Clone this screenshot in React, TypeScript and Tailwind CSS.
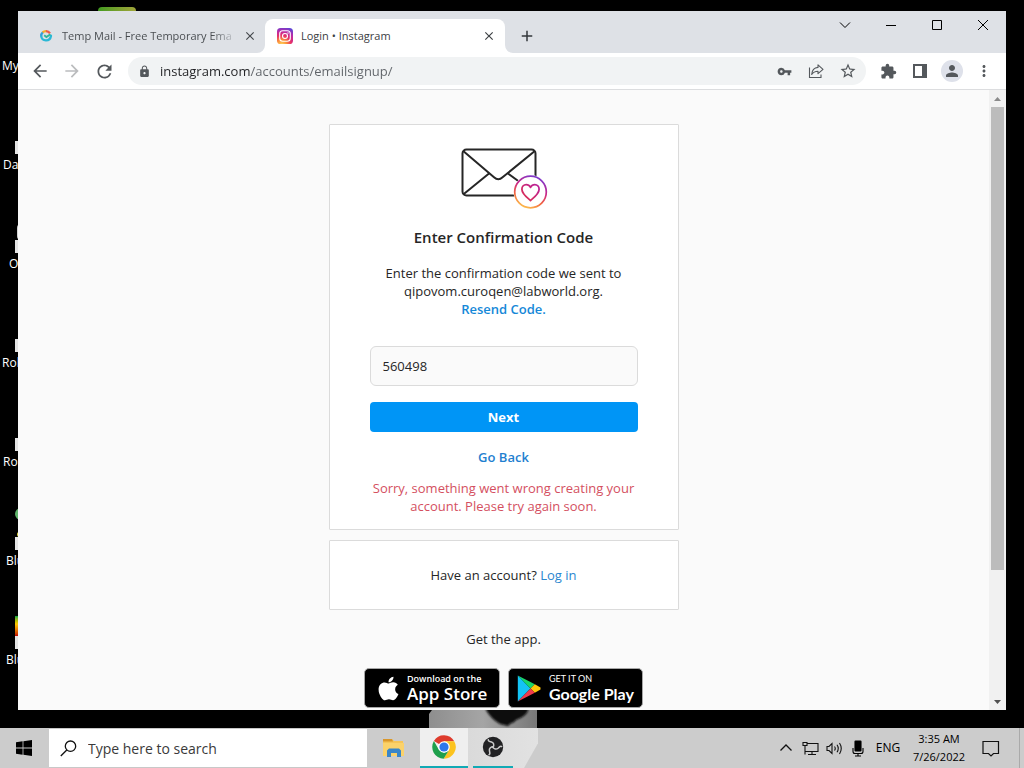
import { useState } from "react";
import type { ReactNode } from "react";
import {
  MdArrowBack,
  MdArrowForward,
  MdClose,
  MdExtension,
  MdLock,
  MdMoreVert,
  MdPerson,
  MdRefresh,
  MdStarBorder,
  MdAdd,
  MdVpnKey,
} from "react-icons/md";
import { FaApple } from "react-icons/fa";

type Shortcut = { label: string; indent: string; badge: boolean; art?: ReactNode };

const shortcuts: Shortcut[] = [
  { label: "My", indent: "pl-[2px]", badge: false },
  { label: "Dat", indent: "pl-[3px]", badge: true },
  { label: "O", indent: "pl-[9px]", badge: true, art: <span className="ml-[2px] h-4 w-2 rounded-full bg-neutral-300" /> },
  { label: "Rol", indent: "pl-[2px]", badge: true },
  { label: "Ro", indent: "pl-[3px]", badge: true },
  {
    label: "Blu",
    indent: "pl-[6px]",
    badge: true,
    art: (
      <>
        <span className="mb-3 size-3 shrink-0 rounded-full bg-[#5fb46b]" />
        <span className="ml-[2px] size-[5px] shrink-0 rounded-full bg-[#d8cf3c]" />
      </>
    ),
  },
  {
    label: "Blu",
    indent: "pl-[6px]",
    badge: true,
    art: <span className="h-5 w-[3px] shrink-0 bg-linear-to-b from-green-600 via-yellow-400 via-40% to-red-700" />,
  },
];

function DesktopShortcuts() {
  return (
    <div className="flex w-[18px] shrink-0 flex-col overflow-hidden pt-[7px] text-white">
      {shortcuts.map((s, i) => (
        <div key={i} className="flex h-[99px] w-20 shrink-0 flex-col pt-1">
          <div className="flex h-5 flex-col items-start justify-end pl-[15px]">{s.art}</div>
          <div className="flex h-[14px] items-start pl-[15px]">
            {s.badge && <span className="h-[13px] w-3 bg-neutral-200" />}
          </div>
          <span className={`${s.indent} mt-[2px] text-[12px] leading-4`}>{s.label}</span>
        </div>
      ))}
    </div>
  );
}

function InstagramIcon() {
  return (
    <svg viewBox="0 0 16 16" className="size-4 shrink-0" aria-hidden="true">
      <defs>
        <radialGradient id="ig" cx="0.3" cy="1.05" r="1.15">
          <stop offset="0" stopColor="#ffd95a" />
          <stop offset="0.28" stopColor="#fb8d3a" />
          <stop offset="0.52" stopColor="#e52e6b" />
          <stop offset="0.76" stopColor="#b52bab" />
          <stop offset="1" stopColor="#5b45d6" />
        </radialGradient>
      </defs>
      <rect width="16" height="16" rx="3.6" fill="url(#ig)" />
      <rect x="2.7" y="2.7" width="10.6" height="10.6" rx="3" fill="none" stroke="#fff" strokeWidth="1.1" />
      <circle cx="8" cy="8" r="2.5" fill="none" stroke="#fff" strokeWidth="1.1" />
      <circle cx="11" cy="5" r="0.7" fill="#fff" />
    </svg>
  );
}

function TempMailIcon() {
  return (
    <svg viewBox="0 0 16 16" className="size-4 shrink-0" fill="none" strokeWidth="2.3" aria-hidden="true">
      <path d="M3.200 8.500A4.900 4.900 0 0 1 5 4.200" stroke="#35a0d8" />
      <path d="M4.600 4.400A4.900 4.900 0 0 1 8.400 3.200" stroke="#f2ae2e" />
      <path d="M8 3.200A4.900 4.900 0 0 1 12 5.400" stroke="#ee5a4a" />
      <path d="M3.200 8A4.900 4.900 0 0 0 12.900 8.300V6.800" stroke="#2bb8d6" />
      <path d="M6.200 7.200l2.200 1.800 4-2.800" stroke="#2fb69a" strokeWidth="1.800" />
    </svg>
  );
}

function TabStrip() {
  return (
    <div className="flex h-[42px] shrink-0 items-stretch bg-[#dee1e6] pl-[7px]">
      <div role="tablist" className="flex items-end">
        <div className="flex h-[34px] w-60 items-center pr-2 pl-[13px] text-[#45494d]">
          <TempMailIcon />
          <button
            role="tab"
            aria-selected="false"
            className="ml-2 w-[176px] overflow-hidden bg-linear-to-r from-[#45494d] from-85% to-transparent bg-clip-text text-left text-[11px] whitespace-nowrap text-transparent"
          >
            Temp Mail - Free Temporary Ema
          </button>
          <button aria-label="Close tab" className="ml-auto">
            <MdClose size={14} />
          </button>
        </div>
        <div className="relative flex h-[34px] w-60 items-center rounded-t-lg bg-white pr-[9px] pl-3 text-[#3c4043]">
          <svg viewBox="0 0 8 8" className="absolute bottom-0 -left-2 size-2 fill-white" aria-hidden="true">
            <path d="M8 0v8H0a8 8 0 0 0 8-8z" />
          </svg>
          <svg viewBox="0 0 8 8" className="absolute -right-2 bottom-0 size-2 fill-white" aria-hidden="true">
            <path d="M0 0v8h8a8 8 0 0 1-8-8z" />
          </svg>
          <InstagramIcon />
          <button role="tab" aria-selected="true" className="ml-2 text-[11px] whitespace-nowrap">
            Login • Instagram
          </button>
          <button aria-label="Close tab" className="ml-auto">
            <MdClose size={14} />
          </button>
        </div>
      </div>
      <button aria-label="New tab" className="ml-[13px] self-end pb-2 text-[#33373b]">
        <MdAdd size={18} />
      </button>
      <div className="ml-auto flex h-7 text-black">
        {[
          { name: "Search tabs", d: "M3 5.500 8 10.500l5-5" },
          { name: "Minimize", d: "M3 8.500h10" },
          { name: "Maximize", d: "M3.500 3.500h9v9h-9z" },
          { name: "Close", d: "M3 3l10 10M13 3 3 13" },
        ].map((c) => (
          <button key={c.name} aria-label={c.name} className="flex w-[46px] items-center justify-center">
            <svg viewBox="0 0 16 16" className="size-4" fill="none" stroke="currentColor" strokeWidth="1">
              <path d={c.d} />
            </svg>
          </button>
        ))}
      </div>
    </div>
  );
}

function IconButton({ label, children, className = "" }: { label: string; children: ReactNode; className?: string }) {
  return (
    <button aria-label={label} className={`flex size-8 shrink-0 items-center justify-center text-[#54585c] ${className}`}>
      {children}
    </button>
  );
}

function Toolbar() {
  const [url, setUrl] = useState("instagram.com/accounts/emailsignup/");
  return (
    <div className="flex h-[37px] shrink-0 items-center border-b border-[#dcdddf] bg-white px-[6px]">
      <IconButton label="Back">
        <MdArrowBack size={20} />
      </IconButton>
      <IconButton label="Forward" className="opacity-40">
        <MdArrowForward size={20} />
      </IconButton>
      <IconButton label="Reload">
        <MdRefresh size={21} />
      </IconButton>
      <div className="mr-[6px] ml-2 flex h-7 grow items-center rounded-full bg-[#f1f3f4] pr-[2px]">
        <IconButton label="Site information">
          <MdLock size={13} />
        </IconButton>
        <input
          aria-label="Address"
          value={url}
          onChange={(e) => setUrl(e.target.value)}
          className="h-7 min-w-0 grow bg-linear-to-r from-[#202124] from-[90px] to-[#5f6368] to-[90px] bg-clip-text text-[13px] text-transparent caret-black outline-none"
        />
        <IconButton label="Passwords">
          <MdVpnKey size={15} />
        </IconButton>
        <IconButton label="Share">
          <svg viewBox="0 0 16 16" className="size-4" fill="none" stroke="currentColor" strokeWidth="1.1">
            <path d="M1.500 4.500v10h11.500v-3" />
            <path d="M10 1.800 15 6.300l-5 4.400V8.200C7 8.200 5.200 9 3.700 11.500 4 7.500 6.300 4.700 10 4.400z" strokeLinejoin="round" />
          </svg>
        </IconButton>
        <IconButton label="Bookmark">
          <MdStarBorder size={18} />
        </IconButton>
      </div>
      <IconButton label="Extensions">
        <MdExtension size={17} />
      </IconButton>
      <IconButton label="Side panel">
        <svg viewBox="0 0 14 14" className="size-[14px]" aria-hidden="true">
          <path d="M0 0h14v14H0zM2 2v10h7V2z" fill="currentColor" fillRule="evenodd" />
        </svg>
      </IconButton>
      <IconButton label="Profile">
        <span className="flex size-[22px] items-center justify-center rounded-full bg-[#dee1ea]">
          <MdPerson size={18} />
        </span>
      </IconButton>
      <IconButton label="Menu">
        <MdMoreVert size={18} />
      </IconButton>
    </div>
  );
}

function EnvelopeArt() {
  return (
    <svg viewBox="0 0 88 62" className="h-[62px] w-[88px]" fill="none" aria-hidden="true">
      <defs>
        <linearGradient id="ring" x1="0.3" y1="1" x2="0.7" y2="0">
          <stop offset="0" stopColor="#fdc04e" />
          <stop offset="0.3" stopColor="#f2643f" />
          <stop offset="0.6" stopColor="#cb2586" />
          <stop offset="1" stopColor="#7a3bd0" />
        </linearGradient>
        <linearGradient id="heart" x1="0" y1="1" x2="1" y2="0">
          <stop offset="0" stopColor="#e0304a" />
          <stop offset="1" stopColor="#b8209c" />
        </linearGradient>
      </defs>
      <g transform="translate(1 1)">
        <g stroke="#262626" strokeWidth="2">
          <rect x="1.500" y="1.500" width="73" height="46" rx="4" />
          <path d="M2.500 3.200 33 29.300c2.800 2.600 5.800 2.600 8.600 0L73.500 3.200" />
          <path d="M28 25.500 2.800 46M47 25.500 60 35" />
        </g>
        <circle cx="69.500" cy="44" r="17" fill="#fff" />
        <circle cx="69.500" cy="44" r="15.800" fill="#fff" stroke="url(#ring)" strokeWidth="1.700" />
        <path
          d="M69.500 52.500c-3-2.500-8.600-6.500-8.600-11.200 0-2.700 2-4.600 4.300-4.600 2 0 3.400 1.100 4.300 2.700.9-1.600 2.300-2.700 4.300-2.700 2.300 0 4.300 1.900 4.300 4.600 0 4.700-5.600 8.700-8.600 11.200z"
          stroke="url(#heart)"
          strokeWidth="1.800"
          strokeLinejoin="round"
        />
      </g>
    </svg>
  );
}

function StoreBadges() {
  return (
    <div className="flex gap-2">
      <a
        href="#app-store"
        className="flex h-10 w-[136px] items-center rounded-[5px] border border-[#a6a6a6] bg-black pl-[10px] font-['Open_Sans',sans-serif] text-white"
      >
        <FaApple size={27} className="mr-[5px] shrink-0" />
        <span className="flex flex-col whitespace-nowrap">
          <span className="text-[9px] leading-3 font-semibold">Download on the</span>
          <span className="text-[17px] leading-[18px] font-semibold">App Store</span>
        </span>
      </a>
      <a
        href="#google-play"
        className="flex h-10 w-[135px] items-center rounded-[5px] border border-[#a6a6a6] bg-black pl-2 font-[Lato,sans-serif] text-white"
      >
        <svg viewBox="0 0 24 27" className="mr-2 h-[27px] w-6 shrink-0" aria-hidden="true">
          <path d="M.8.500 13.500 13.500.8 26.500z" fill="#14c3f5" />
          <path d="M.8.500 17.800 9.300l-4.300 4.200z" fill="#19d66b" />
          <path d="M17.800 9.300 23.500 12.500v2l-5.700 3.200-4.300-4.200z" fill="#fcc50a" />
          <path d="M.8 26.500 13.500 13.500l4.300 4.200z" fill="#ef3b4c" />
        </svg>
        <span className="flex flex-col whitespace-nowrap">
          <span className="text-[9px] leading-3">GET IT ON</span>
          <span className="text-[16px] leading-[18px] font-bold">Google Play</span>
        </span>
      </a>
    </div>
  );
}

function SignupPage() {
  const [code, setCode] = useState("560498");
  return (
    <main className="flex min-w-0 grow flex-col items-center overflow-hidden bg-[#fafafa] pt-[34px] text-[13px] leading-[18px] text-[#262626]">
      <form
        className="flex w-[350px] flex-col items-center rounded-[1px] border border-[#dbdbdb] bg-white px-10 pt-[22px] pb-[14px] text-center"
        onSubmit={(e) => e.preventDefault()}
      >
        <EnvelopeArt />
        <h1 className="mt-4 text-[15px] leading-6 font-semibold">Enter Confirmation Code</h1>
        <p className="mt-[15px]">
          <label htmlFor="code">Enter the confirmation code we sent to</label>
          <br />
          qipovom.curoqen@labworld.org.
        </p>
        <button type="button" className="font-semibold text-[#1588d8]">
          Resend Code.
        </button>
        <input
          id="code"
          value={code}
          onChange={(e) => setCode(e.target.value)}
          className="mt-7 h-10 w-full rounded-md border border-[#dbdbdb] bg-[#fafafa] px-3 outline-none"
        />
        <button className="mt-4 h-[30px] w-full rounded-[4px] bg-[#0095f6] font-bold text-white">Next</button>
        <button type="button" className="mt-4 font-semibold text-[#1f80d0]">
          Go Back
        </button>
        <p role="alert" className="mt-[13px] text-[#d4505f]">
          Sorry, something went wrong creating your
          <br />
          account. Please try again soon.
        </p>
      </form>
      <div className="mt-[10px] flex h-[70px] w-[350px] shrink-0 items-center justify-center rounded-[1px] border border-[#dbdbdb] bg-white">
        <p>
          Have an account?{" "}
          <a href="#login" className="text-[#2a87cf]">
            Log in
          </a>
        </p>
      </div>
      <p className="mt-5 mb-5">Get the app.</p>
      <StoreBadges />
    </main>
  );
}

function Scrollbar() {
  return (
    <div className="flex w-[17px] shrink-0 flex-col items-center bg-[#f1f1f1]">
      <svg viewBox="0 0 17 17" className="size-[17px] shrink-0 fill-[#8a8a8a]" aria-hidden="true">
        <path d="M8.500 7 12 11H5z" />
      </svg>
      <div className="flex w-full grow flex-col px-[2px]">
        <div className="h-[79%] bg-[#bcbcbc]" />
      </div>
      <svg viewBox="0 0 17 17" className="size-[17px] shrink-0 fill-[#505050]" aria-hidden="true">
        <path d="M8.500 11 12 7H5z" />
      </svg>
    </div>
  );
}

function ChromeIcon() {
  return (
    <svg viewBox="0 0 24 24" className="size-6" aria-hidden="true">
      <path d="M12 12 1.900 6A11.700 11.700 0 0 1 22.200 6.200H12z" fill="#de3b2d" />
      <path d="M12 6.200h10.200A11.700 11.700 0 0 1 11.600 23.700L17 15z" fill="#fcc31e" />
      <path d="M1.900 6 7 15l5 2.800 4.600-2-5 7.900A11.700 11.700 0 0 1 1.900 6z" fill="#1fa04c" />
      <circle cx="12" cy="12" r="5.800" fill="#fff" />
      <circle cx="12" cy="12" r="4.600" fill="#2f78ec" />
    </svg>
  );
}

function ObsIcon() {
  const blade = "M11 11.500c1.500-2.500.7-4.800-1.500-5.500C7.300 5.400 6 4.800 6.300 3.700";
  return (
    <svg viewBox="0 0 22 22" className="size-[22px]" fill="none" aria-hidden="true">
      <circle cx="11" cy="11" r="10.200" fill="#222224" />
      <g stroke="#c9c9c9" strokeWidth="1.500" strokeLinecap="round">
        <path d={blade} />
        <path d={blade} transform="rotate(120 11 11)" />
        <path d={blade} transform="rotate(240 11 11)" />
      </g>
    </svg>
  );
}

function FolderIcon() {
  return (
    <svg viewBox="0 0 22 20" className="h-5 w-[22px]" aria-hidden="true">
      <path d="M0 1h9l2 2h9v15H0z" fill="#f6c557" />
      <path d="M0 1h9l1 2.500H0z" fill="#d9972c" />
      <path d="M0 5h21v13H0z" fill="#fbd26b" />
      <path d="M4 19v-6.500l2-2h10l2 2V19h-4v-4H8v4z" fill="#3a86c8" />
    </svg>
  );
}

function Taskbar() {
  return (
    <div className="flex h-10 shrink-0 items-stretch bg-[#cccccc] text-black">
      <button aria-label="Start" className="flex w-12 items-center justify-center">
        <svg viewBox="0 0 16 16" className="size-4" aria-hidden="true">
          <path d="M0 2.300 6.600 1.300v6.300H0zM7.400 1.200 16 0v7.600H7.400zM0 8.400h6.600v6.300L0 13.700zM7.400 8.400H16V16l-8.600-1.200z" />
        </svg>
      </button>
      <label className="ml-px flex w-[318px] shrink items-center gap-[11px] border-y border-[#c8c8c8] bg-white pl-[11px]">
        <svg viewBox="0 0 17 17" className="size-[17px] shrink-0" fill="none" stroke="#111" strokeWidth="1.300">
          <circle cx="10.500" cy="6.200" r="5.200" />
          <path d="M6.800 10 .8 16" />
        </svg>
        <input
          aria-label="Search"
          placeholder="Type here to search"
          className="min-w-0 grow text-[14px] outline-none placeholder:text-[#3a3a3a]"
        />
      </label>
      <div className="flex">
        <button aria-label="File Explorer" className="flex w-[53px] items-center justify-center">
          <FolderIcon />
        </button>
        <button aria-label="Chrome" className="flex w-12 items-center justify-center border-b-2 border-[#12aab5] bg-[#efefef]">
          <ChromeIcon />
        </button>
        <div className="flex w-[70px] bg-linear-to-r from-[#dadada] to-[#e2e2e2] pl-[5px] [clip-path:polygon(0_0,100%_0,100%_38%,80%_100%,0_100%)]">
          <button aria-label="OBS Studio" className="flex w-10 items-center justify-center border-b-2 border-[#12aab5]">
            <ObsIcon />
          </button>
        </div>
      </div>
      <div className="ml-auto flex items-center">
        <button aria-label="Show hidden icons" className="flex w-6 justify-center">
          <svg viewBox="0 0 14 14" className="size-[14px]" fill="none" stroke="#111" strokeWidth="1.300">
            <path d="M1.500 9.500 7 4l5.500 5.500" />
          </svg>
        </button>
        <button aria-label="Network" className="flex w-6 justify-center">
          <svg viewBox="0 0 17 15" className="h-[15px] w-[17px]" fill="none" stroke="#111" strokeWidth="1.100">
            <path d="M5 2.500h11v8H3M10 10.500v3M6 13.500h8" />
            <path d="M1 1.500h4v3H1zM3 4.500v9" />
          </svg>
        </button>
        <button aria-label="Volume" className="flex w-6 justify-center">
          <svg viewBox="0 0 17 15" className="h-[15px] w-[17px]" fill="none" stroke="#111" strokeWidth="1.100">
            <path d="M1 5.500h2l3-3v10l-3-3H1zM8.500 5.500q1.500 2 0 4M11 3.800q2.500 3.700 0 7.400M13.500 2q3.500 5.500 0 11" />
          </svg>
        </button>
        <button aria-label="Microphone" className="flex w-6 justify-center">
          <svg viewBox="0 0 12 17" className="h-[17px] w-3" fill="none" stroke="#000" strokeWidth="1.100">
            <rect x="3" y="1" width="6" height="10" rx="0.500" fill="#000" />
            <path d="M1 8v3.500q0 2 2 2h6q2 0 2-2V8M6 13.500v2.500M3 16h6" />
          </svg>
        </button>
        <span className="w-9 text-center text-[12px]">ENG</span>
        <button className="flex w-[66px] flex-col items-center text-[11px] leading-[18px] whitespace-nowrap">
          <span>3:35 AM</span>
          <span>7/26/2022</span>
        </button>
        <button aria-label="Notifications" className="flex w-[38px] justify-center">
          <svg viewBox="0 0 18 17" className="h-[17px] w-[18px]" fill="none" stroke="#111" strokeWidth="1.200">
            <path d="M1 1.500h15.500v12h-5L9 16l-2.500-2.500H1z" />
          </svg>
        </button>
        <div className="ml-[9px] h-10 w-[5px] border-l border-[#aaaaaa]" />
      </div>
    </div>
  );
}

export default function App() {
  return (
    <div className="flex h-screen min-h-[600px] flex-col overflow-hidden bg-black font-['Open_Sans',sans-serif]">
      <div className="flex h-[11px] shrink-0 items-end pl-[98px]">
        <div className="h-1 w-[38px] rounded-t-full bg-linear-to-r from-[#3f9a20] to-[#a0a53a]" />
      </div>
      <div className="flex min-h-0 grow">
        <DesktopShortcuts />
        <div className="flex min-w-0 grow flex-col bg-white">
          <TabStrip />
          <Toolbar />
          <div className="flex min-h-0 grow">
            <SignupPage />
            <Scrollbar />
          </div>
        </div>
        <div className="w-[18px] shrink-0" />
      </div>
      <div className="flex h-[18px] shrink-0 pl-[429px]">
        <svg viewBox="0 0 108 18" className="h-[18px] w-[108px]" aria-hidden="true">
          <defs>
            <linearGradient id="wall" x1="0" x2="1">
              <stop offset="0" stopColor="#8e8e8e" />
              <stop offset="0.5" stopColor="#a5a5a5" />
              <stop offset="1" stopColor="#777" />
            </linearGradient>
            <filter id="soft">
              <feGaussianBlur stdDeviation="1.2" />
            </filter>
          </defs>
          <path d="M3 0h105v18H0V4z" fill="url(#wall)" />
          <path d="M57-4h42v5q-3 6-12 9-3 4-5 3l-3 3-8-2q-9-5-14-14z" fill="#0b0b0b" filter="url(#soft)" />
        </svg>
      </div>
      <Taskbar />
    </div>
  );
}
